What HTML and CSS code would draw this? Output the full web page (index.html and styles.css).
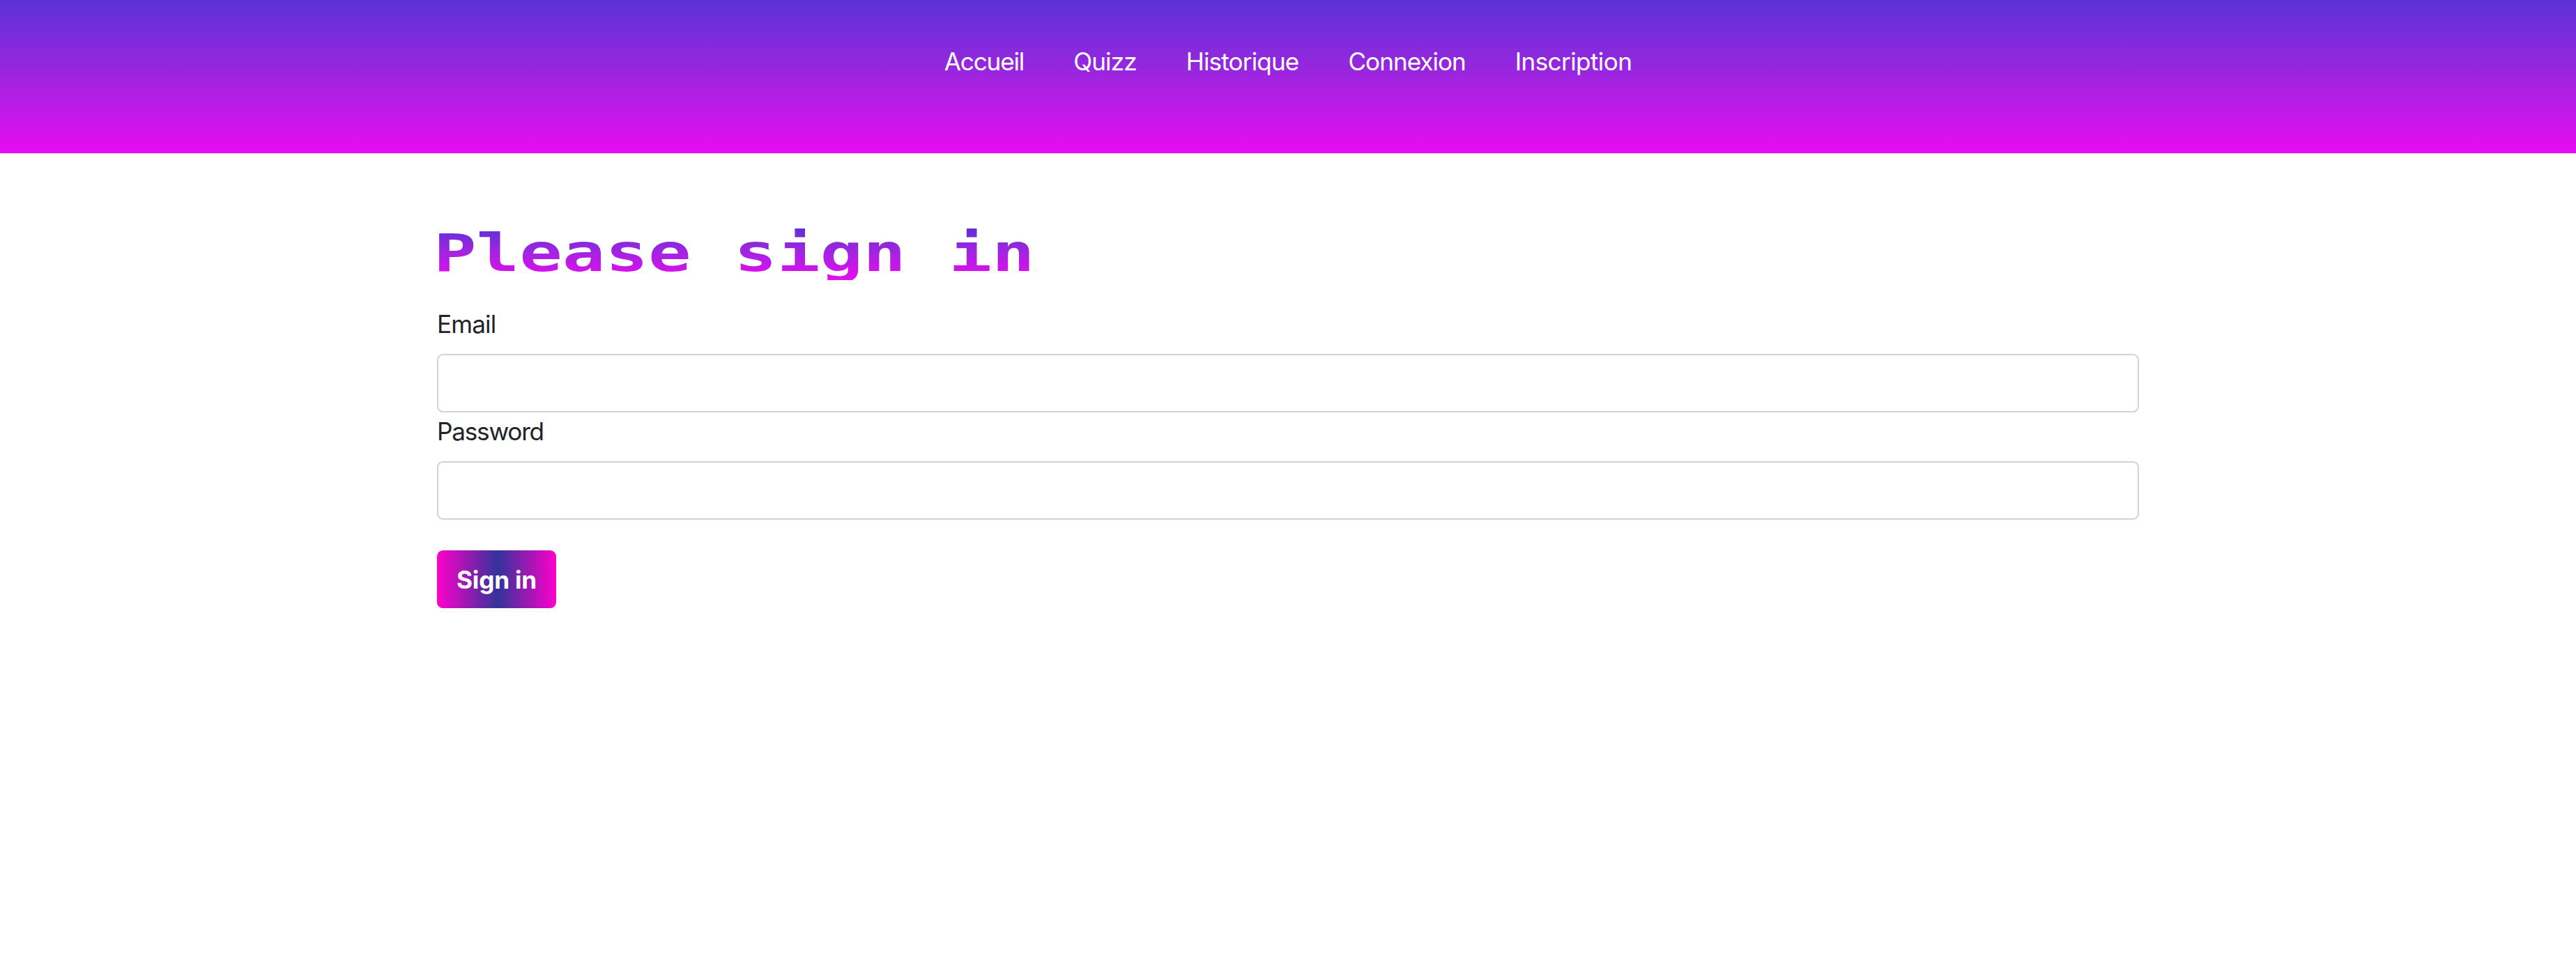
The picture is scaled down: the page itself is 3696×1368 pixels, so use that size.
FILE: index.html
```html
<!DOCTYPE html>
<html lang="fr">
<head>
<meta charset="utf-8">
<title>Connexion</title>
<link rel="stylesheet" href="styles.css">
</head>
<body>
<header class="site-header">
  <nav class="nav">
    <a class="nav-link nav-home" href="#">Accueil</a>
    <a class="nav-link nav-quiz" href="#">Quizz</a>
    <a class="nav-link nav-history" href="#">Historique</a>
    <a class="nav-link nav-login" href="#">Connexion</a>
    <a class="nav-link nav-register" href="#">Inscription</a>
  </nav>
</header>
<main class="container">
  <h1 class="title">Please sign in</h1>
  <form class="form">
    <label class="label" for="email">Email</label>
    <input class="input" id="email" type="email">
    <label class="label label-password" for="password">Password</label>
    <input class="input" id="password" type="password">
    <button class="button" type="button">Sign in</button>
  </form>
</main>
</body>
</html>
```
FILE: styles.css
```css
* {
  box-sizing: border-box;
}

body {
  margin: 0;
  background: #fff;
  color: #212529;
  font: 400 35.2px/52.8px Inter, "Liberation Sans", sans-serif;
  letter-spacing: -0.9px;
}

.site-header {
  height: 220px;
  padding-top: 62px;
  background: linear-gradient(#5a32d6, #9f25e0 50%, #e80bf1);
}

.nav {
  display: flex;
  justify-content: center;
  gap: 71px;
}

.nav-link {
  color: #fff;
  text-decoration: none;
}

.nav-home {
  letter-spacing: -1.2px;
}

.nav-login {
  letter-spacing: -1.05px;
}

.nav-register {
  letter-spacing: -0.65px;
}

.container {
  width: 2442px;
  margin: 0 auto;
  padding-top: 105px;
}

.title {
  width: max-content;
  height: 77px;
  margin: 0 0 36px;
  background: linear-gradient(#5a32d6, #9f25e0 45%, #e80bf1);
  background-clip: text;
  -webkit-background-clip: text;
  color: transparent;
  font: 700 74px/77px "DejaVu Sans Mono", monospace;
  letter-spacing: 0;
  white-space: nowrap;
  transform: translateX(-5px) scaleX(1.383);
  transform-origin: left;
}

.form {
  display: flex;
  flex-direction: column;
  align-items: flex-start;
}

.label {
  height: 53px;
  margin-bottom: 17px;
  padding-top: 1px;
}

.label-password {
  letter-spacing: -1.25px;
}

.input {
  width: 100%;
  height: 84px;
  padding: 13px 26px;
  border: 2px solid #ced4da;
  border-radius: 8.8px;
  background: #fff;
  font: inherit;
}

.button {
  width: 171px;
  height: 83px;
  margin-top: 44px;
  padding: 2px 0 0;
  border: 0;
  border-radius: 8.8px;
  background: linear-gradient(90deg, #ff00cc, #333399 51%, #ff00cc);
  color: #fff;
  font: inherit;
  font-weight: 700;
  letter-spacing: -0.2px;
}
```
